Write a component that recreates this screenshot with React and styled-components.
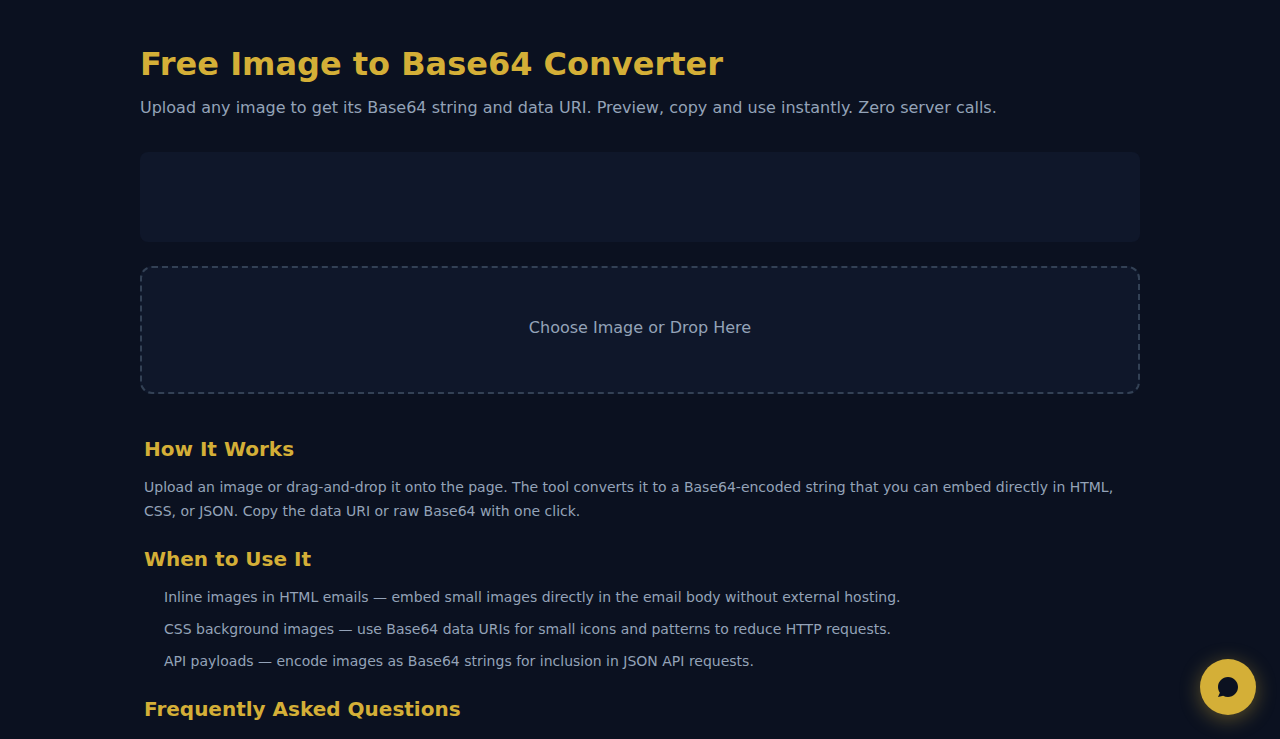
import styled, { createGlobalStyle } from "styled-components";

const useCases = [
  "Inline images in HTML emails — embed small images directly in the email body without external hosting.",
  "CSS background images — use Base64 data URIs for small icons and patterns to reduce HTTP requests.",
  "API payloads — encode images as Base64 strings for inclusion in JSON API requests.",
];

function App() {
  return (
    <>
      <GlobalStyle />
      <StyledPage>
        <StyledHeader>
          <StyledTitle>Free Image to Base64 Converter</StyledTitle>
          <StyledSubtitle>
            Upload any image to get its Base64 string and data URI. Preview,
            copy and use instantly. Zero server calls.
          </StyledSubtitle>
        </StyledHeader>
        <StyledBanner />
        <StyledDropZone htmlFor="image">
          Choose Image or Drop Here
          <StyledFileInput id="image" type="file" accept="image/*" />
        </StyledDropZone>
        <StyledContent>
          <StyledHeading>How It Works</StyledHeading>
          <StyledText>
            Upload an image or drag-and-drop it onto the page. The tool converts
            it to a Base64-encoded string that you can embed directly in HTML,
            CSS, or JSON. Copy the data URI or raw Base64 with one click.
          </StyledText>
          <StyledHeading>When to Use It</StyledHeading>
          <StyledList>
            {useCases.map((useCase) => (
              <StyledListItem key={useCase}>{useCase}</StyledListItem>
            ))}
          </StyledList>
          <StyledHeading>Frequently Asked Questions</StyledHeading>
        </StyledContent>
      </StyledPage>
      <StyledChatButton type="button" aria-label="Open chat">
        <svg width="24" height="24" viewBox="0 0 24 24" fill="currentColor">
          <path d="M12 2C6.48 2 2 6.48 2 12c0 2.17.7 4.19 1.88 5.83L2 22l5.13-1.3A9.96 9.96 0 0 0 12 22c5.52 0 10-4.48 10-10S17.52 2 12 2z" />
        </svg>
      </StyledChatButton>
    </>
  );
}

export default App;

const GlobalStyle = createGlobalStyle`
  * {
    box-sizing: border-box;
    margin: 0;
    padding: 0;
  }
  html {
    scrollbar-width: none;
  }
  body {
    min-height: 100vh;
    background-color: #0b1120;
    color: #94a3b8;
    font-family: "DejaVu Sans", sans-serif;
    font-size: 16px;
    line-height: 24px;
  }
`;
const StyledPage = styled.main`
  max-width: 1048px;
  margin: 0 auto;
  padding: 40px 24px 0;
`;
const StyledHeader = styled.header`
  margin-bottom: 32px;
`;
const StyledTitle = styled.h1`
  margin-bottom: 8px;
  color: #d4af37;
  font-size: 32px;
  line-height: 48px;
`;
const StyledSubtitle = styled.p`
  color: #94a3b8;
`;
const StyledBanner = styled.div`
  min-height: 90px;
  margin-bottom: 24px;
  background-color: #0f172a;
  border-radius: 8px;
`;
const StyledDropZone = styled.label`
  display: block;
  padding: 48px 24px 52px;
  background-color: #0f172a;
  border: 2px dashed #334155;
  border-radius: 12px;
  text-align: center;
  cursor: pointer;
`;
const StyledFileInput = styled.input`
  display: none;
`;
const StyledContent = styled.section`
  margin-top: 40px;
  padding: 0 4px;
  font-size: 14px;
`;
const StyledHeading = styled.h2`
  margin-bottom: 11px;
  color: #d4af37;
  font-size: 20px;
  line-height: 30px;
`;
const StyledText = styled.p`
  margin-bottom: 21px;
`;
const StyledList = styled.ul`
  margin-bottom: 21px;
  padding-left: 20px;
  list-style: none;
`;
const StyledListItem = styled.li`
  margin-bottom: 8px;
`;
const StyledChatButton = styled.button`
  position: fixed;
  right: 24px;
  bottom: 24px;
  display: flex;
  align-items: center;
  justify-content: center;
  width: 56px;
  height: 56px;
  background-color: #d4af37;
  border: none;
  border-radius: 50%;
  box-shadow: 0 4px 20px rgba(212, 175, 55, 0.4);
  color: #0b1120;
  cursor: pointer;
`;
